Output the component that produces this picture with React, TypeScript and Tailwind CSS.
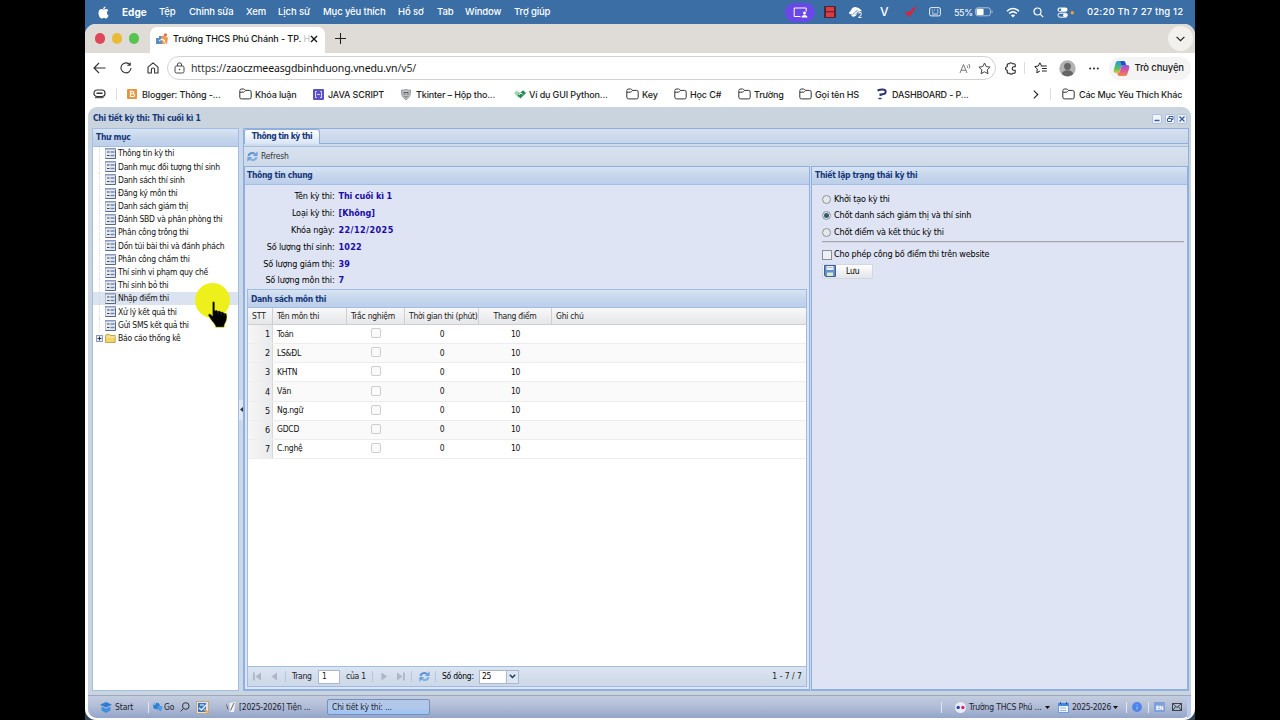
import React from "react";

const menuItems = [
  { name: "Edge", style: "w-[37px] text-[10px] font-bold tracking-normal" },
  { name: "Tệp", style: "w-[30px]" },
  { name: "Chỉnh sửa", style: "w-[57px]" },
  { name: "Xem", style: "w-[32px]" },
  { name: "Lịch sử", style: "w-[45px]" },
  { name: "Mục yêu thích", style: "w-[75px]" },
  { name: "Hồ sơ", style: "w-[39px]" },
  { name: "Tab", style: "w-[28px]" },
  { name: "Window", style: "w-[49px]" },
  { name: "Trợ giúp", style: "w-[60px]" },
];

const treeItems = [
  "Thông tin kỳ thi",
  "Danh mục đối tượng thí sinh",
  "Danh sách thí sinh",
  "Đăng ký môn thi",
  "Danh sách giám thị",
  "Đánh SBD và phân phòng thi",
  "Phân công trông thi",
  "Dồn túi bài thi và đánh phách",
  "Phân công chấm thi",
  "Thí sinh vi phạm quy chế",
  "Thí sinh bỏ thi",
  "Nhập điểm thi",
  "Xử lý kết quả thi",
  "Gửi SMS kết quả thi",
];

const info = [
  { label: "Tên kỳ thi:", value: "Thi cuối kì 1", style: "tracking-[-0.13px]" },
  { label: "Loại kỳ thi:", value: "[Không]", style: "tracking-[0px]" },
  { label: "Khóa ngày:", value: "22/12/2025", style: "tracking-[0.42px]" },
  { label: "Số lượng thí sinh:", value: "1022", style: "tracking-[0.2px]" },
  { label: "Số lượng giám thị:", value: "39", style: "tracking-[0.2px]" },
  { label: "Số lượng môn thi:", value: "7", style: "tracking-[0.2px]" },
];

const subjects = ["Toán", "LS&ĐL", "KHTN", "Văn", "Ng.ngữ", "GDCD", "C.nghệ"];

const states = [
  { id: 1, name: "Khởi tạo kỳ thi", checked: false },
  { id: 2, name: "Chốt danh sách giám thị và thí sinh", checked: true },
  { id: 3, name: "Chốt điểm và kết thúc kỳ thi", checked: false },
];

function FolderOutline() {
  return (
    <svg width="13" height="12" viewBox="0 0 13 12" className="shrink-0" fill="none" stroke="#333" strokeWidth="1">
      <path d="M.8 3V9.2a1.7 1.7 0 0 0 1.7 1.7h8a1.7 1.7 0 0 0 1.7-1.7V4.1a1.7 1.7 0 0 0-1.7-1.7H6.6L5.3 1.3A1.5 1.5 0 0 0 4.4 1H2.5A1.7 1.7 0 0 0 .8 2.7M1 4.2h3.3c.6 0 .9-.2 1.2-.6l1-1.1" />
    </svg>
  );
}

function RefreshBlue() {
  return (
    <svg width="11" height="11" viewBox="0 0 11 11" className="shrink-0" fill="none">
      <path d="M1.500 5C2 2.200 5.500 1 8 3" stroke="#5f93d2" strokeWidth="2.200" />
      <path d="M10.600.3v4.700H5.900z" fill="#6f9fd9" />
      <path d="M9.500 6C9 8.800 5.500 10 3 8" stroke="#7fb0e4" strokeWidth="2.200" />
      <path d="M.4 10.700V6h4.700z" fill="#6f9fd9" />
    </svg>
  );
}

function FormIcon() {
  return (
    <svg width="11" height="11" viewBox="0 0 11 11" className="shrink-0">
      <rect x=".5" y=".5" width="10" height="10" fill="#e6eaf1" stroke="#b4bdcb" />
      <path d="M0 .8h11" stroke="#8797bd" strokeWidth="1.400" />
      <path d="M2 4h2.500M2 7.500h2.500" stroke="#3d4452" strokeWidth="1.100" />
      <path d="M5.500 4h4M5.500 7.500h4" stroke="#6f86b4" strokeWidth="1.300" />
      <path d="M.5 10.500h10V2" fill="none" stroke="#5a6780" />
    </svg>
  );
}

function MenuBar() {
  return (
    <div className="flex h-[40px] shrink-0 items-start bg-[#3a6ea5] text-[10px] leading-none text-white">
      <div className="flex h-6 w-[37px] items-center pl-[13px]">
        <svg width="11" height="13" viewBox="0 0 11 13" fill="#fff">
          <path d="M7.600.4C7.600 1.900 6.500 3 5.200 3 5.100 1.700 6.200.5 7.600.4zM9 6.700c0-1.100.6-1.900 1.400-2.400-.6-.8-1.500-1.200-2.400-1.200-1 0-1.700.5-2.300.5-.6 0-1.300-.5-2.200-.5C1.800 3.200.5 4.500.5 6.900c0 2.500 1.600 5.500 3.100 5.500.8 0 1.200-.5 2.200-.5s1.300.5 2.100.5c1.200 0 2.300-1.900 2.700-3C9.600 9 9 8 9 6.700z" />
        </svg>
      </div>
      <div className="flex h-6 items-center whitespace-nowrap text-[9.500px] font-medium tracking-[-0.12px]">
        {menuItems.map((item) => (
          <span key={item.name} className={item.style}>
            {item.name}
          </span>
        ))}
      </div>
      <div className="ml-[211px] flex h-6 items-center">
        <div className="flex h-[19px] w-[30px] items-center justify-center rounded-full bg-[#6a48e8]">
          <svg width="15" height="11" viewBox="0 0 15 11" fill="none" stroke="#fff">
            <path d="M7.500 9.500H1.200V1h12v3.500" />
            <circle cx="11.500" cy="6" r="1.500" fill="#fff" stroke="none" />
            <path d="M8.500 10.500c0-3.500 6-3.500 6 0z" fill="#fff" stroke="none" />
          </svg>
        </div>
        <svg width="12" height="12" viewBox="0 0 12 12" className="ml-[9px]">
          <rect width="12" height="12" rx="1" fill="#4a2733" />
          <path d="M2 1h8v4.300H2zM2 6.300h8V11H2z" fill="#dc3a44" />
        </svg>
        <svg width="16" height="13" viewBox="0 0 16 13" className="ml-[12px]">
          <path d="M.8 7C1.500 5.800 2.500 5.500 3 4.300 4 2 6 .8 8 1.200c3 .3 5 2 6 4.300-2-.7-3 .3-4 1.500S8 11 5 10.700C3.500 10.500 3 9.500 3.800 8.300 2.500 8.500 1.500 8 .8 7z" fill="#fff" />
          <path d="M4.500 8.500c2-.5 2.500-3.500 5-4M7.500 9c1-1 1.500-2.500 3.500-3.300" stroke="#3a6ea5" strokeWidth=".8" fill="none" />
          <circle cx="12" cy="9.500" r="3.200" fill="#3a6ea5" />
          <text x="9.800" y="12.300" fontSize="7" fill="#fff" fontFamily="Inter" fontWeight="500">2</text>
        </svg>
        <span className="ml-[16px] w-[25px] text-[12px] font-medium">V</span>
        <svg width="12" height="12" viewBox="0 0 12 12" className="shrink-0">
          <path d="M1 5l2.500 1.500L9.500.8 11.500 1 7 7.500 4.500 11.500 3 9 .5 8.500z" fill="#d2283f" />
        </svg>
        <svg width="12" height="10" viewBox="0 0 12 10" className="ml-[12px]" fill="none" stroke="#e8f0f8">
          <rect x=".6" y=".6" width="10.800" height="8.300" rx="1.500" />
          <path d="M2.500 3h1M5 3h1M8 3h1.500M3 5h1.500M8 5h1.500M3 7h6" strokeWidth=".9" />
        </svg>
        <span className="ml-[13px] w-[21px] text-[9px] tracking-[-0.400px]">55%</span>
        <svg width="18" height="10" viewBox="0 0 18 10" fill="none">
          <rect x=".6" y=".8" width="14.800" height="8" rx="2.300" stroke="#a8c1da" />
          <rect x="1.600" y="1.700" width="7" height="6.200" rx="1" fill="#fff" />
          <path d="M17 3.500v2.500" stroke="#a8c1da" />
        </svg>
        <svg width="14" height="11" viewBox="0 0 14 11" className="ml-[13px]" fill="none" stroke="#fff" strokeWidth="1.500">
          <path d="M1 4.200c3.500-3.600 8.500-3.600 12 0M3.200 6.500c2.200-2.200 5.400-2.200 7.600 0" />
          <path d="M4.900 8.300c1.200-1.200 3-1.200 4.200 0L7 10.400z" fill="#fff" stroke="none" />
        </svg>
        <svg width="11" height="11" viewBox="0 0 11 11" className="ml-[13px]" fill="none" stroke="#fff" strokeWidth="1.200">
          <circle cx="4.500" cy="4.500" r="3.500" />
          <path d="M7.200 7.200l3 3" />
        </svg>
        <svg width="18" height="11" viewBox="0 0 18 11" className="ml-[13px]">
          <rect x=".5" y=".5" width="10" height="4.300" rx="2.100" fill="#fff" />
          <circle cx="3" cy="2.700" r="1.300" fill="#3a6ea5" />
          <rect x="1" y="6.200" width="9.400" height="4" rx="2" fill="none" stroke="#fff" />
          <circle cx="8" cy="8.200" r="1.900" fill="#fff" />
          <circle cx="15.300" cy="5.800" r="1.700" fill="#e9a13b" />
        </svg>
        <span className="ml-[12px] whitespace-nowrap text-[9.500px] font-medium tracking-[0.17px]">02:20 Th 7 27 thg 12</span>
      </div>
    </div>
  );
}

function TabStrip() {
  return (
    <div className="flex h-[29px] shrink-0 items-center bg-[#dfdbd7]">
      <div className="flex w-[65px] gap-[6.5px] pl-[9.500px]">
        <span className="size-[10.5px] rounded-full bg-[#df4858]" />
        <span className="size-[10.5px] rounded-full bg-[#eabb35]" />
        <span className="size-[10.5px] rounded-full bg-[#57c452]" />
      </div>
      <div className="flex h-[26px] w-[175px] items-center self-end rounded-t-[7px] bg-white pb-[2px] pl-[6px]">
        <svg width="12" height="12" viewBox="0 0 12 12" className="shrink-0">
          <path d="M0 5h3v6H0zM3 3h3v8H3z" fill="#5a8fc4" />
          <path d="M5 4l3-2 4 3-1 6H6z" fill="#ef9a55" />
          <circle cx="9.500" cy="1.800" r="1.500" fill="#e46a3a" />
          <path d="M3 8l3-2 4 5M7 6l2 2" stroke="#fff" fill="none" />
        </svg>
        <div className="ml-[5px] w-[137px] whitespace-nowrap text-[9px] font-medium leading-[14px] tracking-[-0.08px] text-[#111]">
          Trường THCS Phú Chánh - TP. <span className="text-[#c8c8c8]">H</span>
        </div>
        <svg width="8" height="8" viewBox="0 0 8 8" className="shrink-0" stroke="#111" strokeWidth="1.300">
          <path d="M1 1l6 6M7 1L1 7" />
        </svg>
      </div>
      <svg width="11" height="11" viewBox="0 0 11 11" className="ml-[10px]" stroke="#222" strokeWidth="1.100">
        <path d="M5.500 0v11M0 5.500h11" />
      </svg>
      <div className="ml-auto mr-[2px] flex size-[25px] items-center justify-center rounded-full bg-[#f3f1ee]">
        <svg width="9" height="6" viewBox="0 0 9 6" fill="none" stroke="#222" strokeWidth="1.200">
          <path d="M.6.8l3.900 3.900L8.400.8" />
        </svg>
      </div>
    </div>
  );
}

function AddressBar() {
  return (
    <div className="flex h-[29px] shrink-0 items-center bg-white pt-px">
      <svg width="13" height="12" viewBox="0 0 13 12" className="ml-[8px]" fill="none" stroke="#333" strokeWidth="1.100">
        <path d="M6 1L1 6l5 5M1 6h11.500" />
      </svg>
      <svg width="12" height="12" viewBox="0 0 12 12" className="ml-[14px]" fill="none" stroke="#333" strokeWidth="1.100">
        <path d="M9.900 2.700A5 5 0 1 0 11 6M10.200.5v2.800H7.300" />
      </svg>
      <svg width="12" height="12" viewBox="0 0 12 12" className="ml-[15px]" fill="none" stroke="#333" strokeWidth="1.100">
        <path d="M1 5.200L6 .9l5 4.300V11H7.600V7.600a1.600 1.600 0 0 0-3.200 0V11H1z" strokeLinejoin="round" />
      </svg>
      <div className="ml-[8px] flex h-[24px] w-[829px] items-center rounded-full border border-[#d2d2d2]">
        <svg width="11" height="12" viewBox="0 0 11 12" className="ml-[6px]" fill="none" stroke="#444">
          <rect x="1" y="4" width="9" height="7" rx="1.500" />
          <path d="M3.300 4V3a2.200 2.200 0 0 1 4.400 0v1" />
          <circle cx="5.500" cy="7.500" r=".8" fill="#444" stroke="none" />
        </svg>
        <span className="ml-[6px] whitespace-nowrap font-['Noto_Sans',sans-serif] text-[10.5px] leading-none tracking-[-0.13px] text-[#333]">
          https://<span className="text-[#111]">zaoczmeeasgdbinhduong.vnedu.vn</span>/v5/
        </span>
        <svg width="12" height="11" viewBox="0 0 12 11" className="ml-auto" fill="none" stroke="#666" strokeWidth=".9">
          <path d="M1 10l3.500-8.500L8 10M2.200 7.300h4.600M8 2.500c.8.600.8 1.800.3 2.500M9.500 1c1.500 1.200 1.500 3.300.5 4.600" />
        </svg>
        <svg width="13" height="13" viewBox="0 0 13 13" className="ml-[7px] mr-[4px]" fill="none" stroke="#444">
          <path d="M6.500 1l1.700 3.600 3.900.5-2.900 2.700.8 3.900-3.500-1.900L3 11.700l.8-3.900L.9 5.100l3.900-.5z" strokeLinejoin="round" />
        </svg>
      </div>
      <svg width="12" height="13" viewBox="0 0 12 13" className="ml-[9px]" fill="none" stroke="#222" strokeWidth="1.100">
        <path d="M10.200 4.700V2.800a1 1 0 0 0-1-1H7.400a1.500 1.500 0 0 0-2.900 0H3.200a1 1 0 0 0-1 1v2a1.700 1.700 0 0 0 0 3.400v2a1 1 0 0 0 1 1h1.500a1.500 1.500 0 0 0 2.900 0h1.600a1 1 0 0 0 1-1V8.300H9a1.800 1.800 0 0 1 0-3.600z" strokeLinejoin="round" />
      </svg>
      <span className="ml-[7px] h-[12px] w-px bg-[#ddd]" />
      <svg width="13" height="12" viewBox="0 0 13 12" className="ml-[9px]" fill="none" stroke="#222">
        <path d="M7.500 3.800L5.900.8 4.300 4 .8 4.600l2.500 2.500-.5 3.700 3.100-1.700M6.800 4h6M8 6.500h4.800M8 9h4.800" strokeLinejoin="round" />
      </svg>
      <svg width="17" height="17" viewBox="0 0 17 17" className="ml-[12px]">
        <circle cx="8.500" cy="8.500" r="8.200" fill="#b3b3b3" />
        <circle cx="8.500" cy="6.500" r="3.400" fill="#666" />
        <path d="M3 14c0-5 11-5 11 0-3 3-8 3-11 0z" fill="#666" />
      </svg>
      <svg width="10" height="3" viewBox="0 0 10 3" className="ml-[13px]" fill="#222">
        <circle cx="1.200" cy="1.500" r="1" />
        <circle cx="5" cy="1.500" r="1" />
        <circle cx="8.800" cy="1.500" r="1" />
      </svg>
      <div className="ml-[10px] flex h-[23px] w-[82px] items-center rounded-full bg-[#f4f4f4] pl-[4px]">
        <svg width="17" height="17" viewBox="0 0 17 17" className="shrink-0">
          <defs>
            <linearGradient id="cpA" x1="0" y1="0" x2="0" y2="1">
              <stop offset="0" stopColor="#1f9be0" />
              <stop offset=".6" stopColor="#4fc06a" />
              <stop offset="1" stopColor="#e9c32c" />
            </linearGradient>
            <linearGradient id="cpB" x1="0" y1="0" x2="0" y2="1">
              <stop offset="0" stopColor="#8a5be0" />
              <stop offset=".5" stopColor="#e0559a" />
              <stop offset="1" stopColor="#f08a4a" />
            </linearGradient>
          </defs>
          <path d="M5 1h5.500c1 0 1.500.6 1.800 1.500L13 5h-2.500c-1.500 0-2 .6-2.400 2l-1.200 4c-.4 1.500-1 2-2.400 2H2.700C.9 13 .3 11.500.8 9.800L2.500 3.500C3 1.800 3.600 1 5 1z" fill="url(#cpA)" />
          <path d="M12 16H6.500c-1 0-1.500-.6-1.800-1.500L4.300 13c1.600 0 2.300-.5 2.700-2l1.200-4c.4-1.500 1-2 2.400-2h3.700c1.800 0 2.400 1.500 1.900 3.200l-1.700 5.300c-.5 1.700-1.100 2.500-2.500 2.500z" fill="url(#cpB)" />
          <path d="M7.500 1H10c1.300 0 2 .6 2.300 1.500L13 5h-2.500c-1 0-1.600.3-2 1z" fill="#2452c4" />
        </svg>
        <span className="ml-[4.500px] whitespace-nowrap text-[9.5px] font-medium leading-none tracking-[-0.15px] text-[#222]">Trò chuyện</span>
      </div>
    </div>
  );
}

function Bookmarks() {
  return (
    <div className="flex h-[25px] shrink-0 items-center whitespace-nowrap bg-white pb-px text-[9px] font-medium leading-none tracking-[-0.14px] text-[#222]">
      <svg width="13" height="10" viewBox="0 0 13 10" className="ml-[8px]" fill="none" stroke="#333" strokeWidth="1.200">
        <rect x="1" y="1" width="11" height="6.500" rx="3" />
        <path d="M3.500 4.300h6" strokeWidth="1.600" />
        <path d="M2 8.700h8.500" strokeWidth="1" />
      </svg>
      <span className="ml-[10px] h-[12px] w-px bg-[#ddd]" />
      <div className="ml-[10px] flex w-[112px] items-center gap-[5px]">
        <svg width="10" height="10" viewBox="0 0 10 10">
          <rect width="10" height="10" rx="1" fill="#e6973d" />
          <path d="M3.500 2.300h2a1.200 1.200 0 0 1 0 2.400h-2zM3.500 4.700h2.800a1.400 1.400 0 0 1 0 2.800H3.500z" fill="none" stroke="#fff" strokeWidth="1.100" />
        </svg>
        Blogger: Thông -...
      </div>
      <div className="flex w-[74px] items-center gap-[3px]">
        <FolderOutline />
        Khóa luận
      </div>
      <div className="flex w-[88px] items-center gap-[4px]">
        <svg width="11" height="11" viewBox="0 0 11 11">
          <rect width="11" height="11" rx="1" fill="#5c50c8" />
          <path d="M4 2.500H2.500v6H4M7 2.500h1.500v6H7M3.800 5.500h3.400" fill="none" stroke="#e8e4ff" strokeWidth=".9" />
        </svg>
        JAVA SCRIPT
      </div>
      <div className="flex w-[113px] items-center gap-[5px]">
        <svg width="10" height="11" viewBox="0 0 10 11">
          <path d="M.5 1C3 1.500 4 .6 5 .2 6 .6 7 1.500 9.500 1c.2 4-.5 7.500-4.500 9.700C1 8.500.3 5 .5 1z" fill="#bfc3c8" stroke="#777" strokeWidth=".7" />
          <path d="M2.500 3.500h5M2.500 5h2M5.800 5h2M3.500 7l1.500 1.500L6.500 7" stroke="#555" strokeWidth=".9" fill="none" />
        </svg>
        Tkinter – Hộp tho...
      </div>
      <div className="flex w-[112px] items-center gap-[3px]">
        <svg width="12" height="9" viewBox="0 0 12 9">
          <path d="M0 3l3-2.500L6 3l-1.500 5z" fill="#9ed6b4" />
          <path d="M6 3L9 .3 12 3 6.500 8.500 3.500 5.500z" fill="#2c8b55" />
          <path d="M5 5l2-2 1.500 1.500" stroke="#fff" fill="none" />
        </svg>
        Ví dụ GUI Python...
      </div>
      <div className="flex w-[48px] items-center gap-[3px]">
        <FolderOutline />
        Key
      </div>
      <div className="flex w-[64px] items-center gap-[3px]">
        <FolderOutline />
        Học C#
      </div>
      <div className="flex w-[61px] items-center gap-[3px]">
        <FolderOutline />
        Trường
      </div>
      <div className="flex w-[78px] items-center gap-[3px]">
        <FolderOutline />
        Gọi tên HS
      </div>
      <div className="flex w-[156px] items-center gap-[5px]">
        <svg width="10" height="12" viewBox="0 0 10 12" fill="none" stroke="#28326e" strokeWidth="2">
          <path d="M.5 2.500C3 1.500 8.500.5 8.700 3.500 8.800 6 6 6.500 3.500 6.500V8" />
          <path d="M1.500 10.500h3" strokeWidth="1.500" />
        </svg>
        DASHBOARD - P...
      </div>
      <svg width="6" height="9" viewBox="0 0 6 9" className="shrink-0" fill="none" stroke="#222" strokeWidth="1.100">
        <path d="M.8.700l4 3.800-4 3.800" />
      </svg>
      <span className="ml-[11px] h-[12px] w-px bg-[#ddd]" />
      <div className="ml-[11px] flex items-center gap-[4px] tracking-[-0.2px]">
        <FolderOutline />
        Các Mục Yêu Thích Khác
      </div>
    </div>
  );
}

function PanelTitle({ children, className = "" }: { children: React.ReactNode; className?: string }) {
  return (
    <div
      className={`flex h-[18px] shrink-0 items-center whitespace-nowrap border-b border-[#a3bde3] bg-linear-to-b from-[#d8e4f3] via-[#c6d6ec] via-50% to-[#bccfea] font-bold tracking-[-0.32px] text-[#17377a] ${className}`}
    >
      {children}
    </div>
  );
}

function Sidebar() {
  return (
    <div className="flex w-[147px] shrink-0 flex-col border border-[#a3bde3] bg-white">
      <PanelTitle className="pb-px pl-[3px]">Thư mục</PanelTitle>
      <div className="relative">
        {treeItems.map((item) => (
          <div
            key={item}
            className={`flex h-[13.2px] items-center whitespace-nowrap pl-[6px] ${item === "Nhập điểm thi" ? "bg-[#dce3f0]" : ""}`}
          >
            <span className="mr-[1px] h-full w-[5px] border-l border-dotted border-[#dadada]" />
            <FormIcon />
            <span className="ml-[2px]">{item}</span>
          </div>
        ))}
        <div className="flex h-[13.2px] items-center whitespace-nowrap pl-[3px]">
          <svg width="7" height="7" viewBox="0 0 7 7">
            <rect x=".5" y=".5" width="6" height="6" fill="#e9edf4" stroke="#8d9bb6" />
            <path d="M3.500 1.500v4M1.500 3.500h4" stroke="#334" />
          </svg>
          <svg width="11" height="9" viewBox="0 0 11 9" className="ml-[2px]">
            <path d="M.5 1.500l.8-1h3l1 1h4.900v7H.5z" fill="#f2d468" stroke="#b8953a" strokeWidth=".8" />
            <path d="M1 3h9" stroke="#fbeeb0" />
          </svg>
          <span className="ml-[2px]">Báo cáo thống kê</span>
        </div>
        {/* highlighted mouse pointer */}
        <div className="absolute left-[102px] top-[136px] size-[35px] rounded-full bg-[#eef01c]" />
        <svg width="23" height="31" viewBox="0 0 22 31" className="absolute left-[113px] top-[153px]" preserveAspectRatio="none">
          <path
            d="M7.200 1.500c1 0 1.300.7 1.300 1.500v7.500c.5-.8 2.700-.7 2.900.7.700-.9 2.700-.6 3 .8.900-.8 2.900-.2 3 1.200.8-.5 2.400.1 2.600 1.600.3 3.500-.2 6-1.500 8.200-.7 1.300-1 2.300-1.100 4.300H9.200c-.3-2.500-1.700-3.800-3.200-5.700C4.300 19.500 3.600 17.600 2.300 16c-.8-1.200.1-2.600 1.500-2.200.9.300 1.600 1.100 2.200 2V3c0-.8.300-1.500 1.200-1.500z"
            fill="#000"
            stroke="#eef01c"
            strokeWidth=".6"
          />
          <path d="M11.400 11.500v3M14.400 12.500v2.500M17.300 13.500v2" stroke="#555" strokeWidth=".5" />
        </svg>
      </div>
    </div>
  );
}

function SubjectGrid() {
  return (
    <div className="ml-[2px] flex w-[560px] flex-1 flex-col border border-[#9fbbe2] bg-white">
      <PanelTitle className="pl-[3px]">Danh sách môn thi</PanelTitle>
      <div className="flex h-[17px] shrink-0 items-center whitespace-nowrap border-b border-[#cfcfcf] bg-linear-to-b from-[#f8f8f8] to-[#e6e7ea] text-[#222]">
        <span className="flex h-full w-[25px] items-center border-r border-[#cfcfcf] pl-[4px] tracking-[-0.100px]">STT</span>
        <span className="flex h-full w-[74px] items-center border-r border-[#cfcfcf] pl-[4px]">Tên môn thi</span>
        <span className="flex h-full w-[58px] items-center border-r border-[#cfcfcf] pl-[4px]">Trắc nghiệm</span>
        <span className="flex h-full w-[74px] items-center overflow-hidden border-r border-[#cfcfcf] pl-[4px]">Thời gian thi (phút)</span>
        <span className="flex h-full w-[73px] items-center justify-center border-r border-[#cfcfcf]">Thang điểm</span>
        <span className="pl-[4px]">Ghi chú</span>
      </div>
      {subjects.map((name, index) => (
        <div
          key={name}
          className={`flex h-[19.050px] shrink-0 items-center border-b border-[#ededed] ${index % 2 ? "bg-[#fafafa]" : "bg-white"}`}
        >
          <span className="flex h-full w-[25px] items-center justify-end border-r border-[#d8d8d8] bg-linear-to-r from-[#f6f6f6] to-[#e9eaec] pr-[2px] pt-px text-[9px]">
            {index + 1}
          </span>
          <span className="w-[74px] pl-[4px]">{name}</span>
          <span className="flex w-[58px] justify-center">
            <span className="mb-[2px] size-[10px] rounded-[2px] border border-[#cdcdcd] bg-[#fafafa]" />
          </span>
          <span className="w-[74px] text-center">0</span>
          <span className="w-[73px] text-center">10</span>
        </div>
      ))}
      <div className="mt-auto flex h-[20px] shrink-0 items-center whitespace-nowrap border-t border-[#a3bde3] bg-linear-to-b from-[#dbe4f1] to-[#ccd8e8] text-[#222]">
        <svg width="30" height="9" viewBox="0 0 30 9" className="ml-[5px]" fill="#acb6c4">
          <path d="M0 .5h1.800v8H0zM8 .5v8l-5.500-4zM24 .5v8l-5.500-4z" />
        </svg>
        <span className="ml-[2px] h-[11px] w-px bg-[#b5c5dc]" />
        <span className="ml-[6px] w-[26px]">Trang</span>
        <span className="flex h-[14px] w-[22px] items-center border border-[#a9b8cc] bg-white pl-[3px]">1</span>
        <span className="ml-[6px] w-[25px]">của 1</span>
        <span className="ml-[1px] h-[11px] w-px bg-[#b5c5dc]" />
        <svg width="25" height="9" viewBox="0 0 25 9" className="ml-[8px]" fill="#acb6c4">
          <path d="M.5.500v8l5.500-4zM16 .5v8l5.500-4zM22 .5h1.800v8H22z" />
        </svg>
        <span className="ml-[5px] mr-[7px] h-[11px] w-px bg-[#b5c5dc]" />
        <RefreshBlue />
        <span className="ml-[5px] h-[11px] w-px bg-[#b5c5dc]" />
        <span className="ml-[6px] w-[37px] text-black">Số dòng:</span>
        <span className="flex h-[14px] w-[28px] items-center border border-[#a9b8cc] bg-white pl-[2px] text-black">25</span>
        <span className="flex h-[14px] w-[12px] items-center justify-center border border-l-0 border-[#a9b8cc] bg-[#dde7f4]">
          <svg width="7" height="5" viewBox="0 0 7 5" fill="none" stroke="#223a66" strokeWidth="1.500">
            <path d="M.8.800l2.700 2.700L6.200.8" />
          </svg>
        </span>
        <span className="ml-auto mr-[4px] tracking-[0px]">1 - 7 / 7</span>
      </div>
    </div>
  );
}

function StatusPanel() {
  return (
    <div className="ml-[1px] flex flex-1 flex-col border border-[#8fb0de] bg-[#dee4f3]">
      <PanelTitle className="pl-[3px]">Thiết lập trạng thái kỳ thi</PanelTitle>
      <div className="flex flex-col pl-[10px] pr-[3px] pt-[6px] text-[9px] tracking-[-0.19px] text-black">
        {states.map((s) => (
          <div key={s.id} className="flex h-[16.500px] items-center">
            <span className="flex size-[9px] items-center justify-center rounded-full border border-[#8c9096] bg-[#e6e9ec]">
              {s.checked && <span className="size-[5px] rounded-full bg-[#355a6e]" />}
            </span>
            <span className="ml-[3px]">{s.name}</span>
          </div>
        ))}
        <div className="h-[2px] border-t border-[#a4a8b0] bg-[#ced3df]" />
        <div className="mt-[4px] flex h-[16px] items-center">
          <span className="size-[10px] border border-[#8c9096] bg-[#eceff4]" />
          <span className="ml-[2px]">Cho phép công bố điểm thi trên website</span>
        </div>
        <div className="mt-px flex h-[15px] w-[51px] items-center border border-[#d3d8e0] bg-linear-to-b from-white to-[#e4e5ea] pl-[1px]">
          <svg width="12" height="12" viewBox="0 0 12 12">
            <path d="M.5.500h11v11h-10l-1-1z" fill="#668fcb" stroke="#3c5f98" />
            <path d="M2.500 1h7v4h-7z" fill="#eaf0f8" />
            <path d="M3 7.500h6V11H3z" fill="#d5ecc8" />
            <path d="M3.500 2.500h5" stroke="#9ab" strokeWidth=".7" />
          </svg>
          <span className="ml-[10px] text-[8.500px]">Lưu</span>
        </div>
      </div>
    </div>
  );
}

function ExamPanel() {
  return (
    <div className="flex flex-1 flex-col border border-[#8fb0de] bg-[#cfdcee]">
      <div className="flex h-[15px] shrink-0 items-end border-b border-[#8fb0de] bg-linear-to-b from-[#d5e0f0] to-[#c8d6ea]">
        <div className="-mb-px flex h-[15px] w-[76px] items-center justify-center whitespace-nowrap rounded-t-[3px] border border-b-0 border-[#8fb0de] bg-linear-to-b from-white to-[#d8e4f5] pb-px font-bold tracking-[-0.5px] text-[#17377a]">
          Thông tin kỳ thi
        </div>
      </div>
      <div className="mt-[2px] flex h-[20px] shrink-0 items-center border-t border-[#a3bde3] bg-linear-to-b from-[#d9e2ef] to-[#cdd9e8] pl-[3px] text-[#333]">
        <RefreshBlue />
        <span className="ml-[3px] tracking-[-0.15px]">Refresh</span>
      </div>
      <div className="flex flex-1">
        <div className="flex w-[566px] flex-col border border-[#8fb0de] bg-[#dee4f3] pb-[2px]">
          <PanelTitle className="pl-[2px]">Thông tin chung</PanelTitle>
          <div className="pt-[3px] text-[9px] text-black">
            {info.map((row) => (
              <div key={row.label} className="flex h-[16.900px] items-center whitespace-nowrap">
                <span className="w-[89.500px] text-right tracking-[-0.15px]">{row.label}</span>
                <span className={`ml-[4px] font-bold text-[#1b0ba5] ${row.style}`}>{row.value}</span>
              </div>
            ))}
          </div>
          <SubjectGrid />
        </div>
        <StatusPanel />
      </div>
    </div>
  );
}

function Taskbar() {
  return (
    <div className="flex h-[22px] shrink-0 items-center whitespace-nowrap rounded-b-[9px] bg-linear-to-b from-[#c4cddf] via-[#b0bcd6] to-[#93a5c8] text-[#1c2430]">
      <svg width="12" height="11" viewBox="0 0 12 11" className="ml-[12px]">
        <path d="M6 0l6 2.800-6 2.800L0 2.800z" fill="#2f7cd0" />
        <path d="M1.500 4.500L6 6.700l4.500-2.200v4L6 11 1.500 8.500z" fill="#3f8fe0" />
      </svg>
      <span className="ml-[3px] w-[33px] tracking-[-0.1px]">Start</span>
      <span className="h-[11px] w-px bg-[#e1e7f2]" />
      <svg width="10" height="10" viewBox="0 0 10 10" className="ml-[4px]">
        <circle cx="3.500" cy="4" r="3.300" fill="#2f7cd0" />
        <path d="M5 3.500l4.500 1L8 9.500 4 7z" fill="#4a9be8" />
        <path d="M1 2.500l2-1" stroke="#bfe0ff" />
      </svg>
      <span className="ml-[1px] w-[16px]">Go</span>
      <svg width="10" height="10" viewBox="0 0 10 10" fill="none" stroke="#333">
        <circle cx="5.800" cy="4" r="3.300" />
        <path d="M3.500 6.500L.7 9.300" />
      </svg>
      <svg width="13" height="13" viewBox="0 0 13 13" className="ml-[6px]">
        <rect x=".5" y=".5" width="12" height="12" fill="#dfe4ec" stroke="#c9a878" />
        <path d="M2 2h8v9H2z" fill="#3b78c4" />
        <path d="M3 7l2.500 2L10 4M4 4h4" fill="none" stroke="#f4f7fb" strokeWidth="1.200" />
        <path d="M8 8l3.500 3.500" stroke="#e7a04a" strokeWidth="1.800" />
      </svg>
      <svg width="10" height="10" viewBox="0 0 10 10" className="ml-[17px]">
        <path d="M3.500 1l6-1-1.500 10H3.500z" fill="#f1f2f4" />
        <path d="M.5 2.500l1.500 5M8 1L4.500 8.500" stroke="#666" />
      </svg>
      <span className="ml-[3px] w-[88px] tracking-[-0.22px]">[2025-2026] Tiện ...</span>
      <div className="flex h-[16px] w-[103px] items-center rounded-[2px] border border-[#7490bf] bg-linear-to-b from-[#b3c8e8] from-50% to-[#9cc3f5] pl-[4px] tracking-[-0.2px]">
        Chi tiết kỳ thi: ...
      </div>
      <span className="ml-auto h-[11px] w-px bg-[#e1e7f2]" />
      <svg width="11" height="11" viewBox="0 0 11 11" className="ml-[13px]">
        <circle cx="5.500" cy="5.500" r="5.500" fill="#e9ecf2" />
        <circle cx="3.200" cy="5.500" r="1.700" fill="#2b4cab" />
        <circle cx="7.900" cy="5.500" r="1.700" fill="#d22a72" />
      </svg>
      <span className="ml-[3px] w-[76px] tracking-[-0.15px]">Trường THCS Phú ...</span>
      <svg width="5" height="3" viewBox="0 0 5 3">
        <path d="M0 0h5L2.500 3z" fill="#111" />
      </svg>
      <svg width="11" height="11" viewBox="0 0 11 11" className="ml-[8px]">
        <rect x=".5" y="1.500" width="10" height="9" fill="#f0f5fc" stroke="#6d9cd8" />
        <path d="M.5 1h10v3H.5z" fill="#3d86dd" />
        <path d="M2.500 0v2M8.500 0v2" stroke="#23538f" />
        <path d="M2.500 6h6M2.500 8.500h6" stroke="#5a8fd0" strokeWidth="1.200" strokeDasharray="1.200 .8" />
      </svg>
      <span className="ml-[3px] w-[41px] tracking-[-0.3px]">2025-2026</span>
      <svg width="5" height="3" viewBox="0 0 5 3">
        <path d="M0 0h5L2.500 3z" fill="#111" />
      </svg>
      <span className="ml-[8px] h-[11px] w-px bg-[#e1e7f2]" />
      <svg width="10" height="10" viewBox="0 0 10 10" className="ml-[5px]">
        <circle cx="5" cy="5" r="4.900" fill="#4c84ea" />
        <path d="M5 4.500v3M5 2.300v1" stroke="#a9c6fb" />
      </svg>
      <span className="ml-[6px] h-[11px] w-px bg-[#e1e7f2]" />
      <span className="ml-[5px] flex h-[10px] w-[11px] items-end justify-center rounded-[1px] bg-[#7e9fdb] text-[6px] font-bold leading-[8px] tracking-[-0.3px] text-white">EN</span>
      <svg width="10" height="8" viewBox="0 0 10 8" className="ml-[7px] mr-[5px]" fill="none" stroke="#222">
        <path d="M.5.500h9v7h-9zM.5.500L5 4.500l4.500-4M.5 7.500l3.200-4M9.500 7.500l-3.200-4" strokeWidth=".8" />
      </svg>
      <span className="h-full w-[4px] rounded-br-[9px] bg-[#bccbec]" />
    </div>
  );
}

function App() {
  return (
    <div className="flex h-[720px] w-[1280px] justify-center overflow-hidden bg-black font-['Inter','Noto_Sans',sans-serif]">
      <div className="flex h-full w-[1110px] flex-col bg-[#34435a]">
        <MenuBar />
        <div className="-mt-[16px] flex flex-1 flex-col overflow-hidden rounded-[11px] bg-white">
          <TabStrip />
          <AddressBar />
          <Bookmarks />
          <div className="mb-[2px] ml-[3px] mr-[4px] flex flex-1 flex-col rounded-[9px] bg-[#c9d4de] font-['DejaVu_Sans_Condensed','DejaVu_Sans',sans-serif] text-[8.500px] leading-none tracking-[-0.25px] text-[#111]">
            <div className="flex h-[21px] shrink-0 items-center pl-[5px] pr-[4px] pt-[2px]">
              <span className="font-bold tracking-[-0.3px] text-[#17377a]">Chi tiết kỳ thi: Thi cuối kì 1</span>
              <div className="ml-auto flex gap-[2.500px]">
                <svg width="10" height="10" viewBox="0 0 10 10">
                  <rect x=".5" y=".5" width="9" height="9" rx="1.500" fill="#f0f5fc" stroke="#a9c0e4" />
                  <path d="M2.500 6.500h5" stroke="#3c5a9a" strokeWidth="1.400" />
                </svg>
                <svg width="10" height="10" viewBox="0 0 10 10">
                  <rect x=".5" y=".5" width="9" height="9" rx="1.500" fill="#f0f5fc" stroke="#a9c0e4" />
                  <path d="M2.500 4.500h4v3h-4zM4 4V2.500h4v3H7" fill="none" stroke="#3c5a9a" />
                </svg>
                <svg width="10" height="10" viewBox="0 0 10 10">
                  <rect x=".5" y=".5" width="9" height="9" rx="1.500" fill="#f0f5fc" stroke="#a9c0e4" />
                  <path d="M2.500 2.500l5 5M7.500 2.500l-5 5" stroke="#3c5a9a" strokeWidth="1.300" />
                </svg>
              </div>
            </div>
            <div className="ml-[4px] mr-[2px] flex h-[563px] shrink-0">
              <Sidebar />
              {/* collapse handle between the tree and the content */}
              <div className="flex w-[4px] shrink-0 items-center justify-center bg-[#cbd8ea]">
                <span className="flex h-[20px] w-[4px] items-center justify-center bg-[#dfe7f3]">
                  <svg width="3" height="5" viewBox="0 0 3 5">
                    <path d="M3 0v5L0 2.500z" fill="#333" />
                  </svg>
                </span>
              </div>
              <ExamPanel />
            </div>
            <div className="h-[5px] shrink-0 border-b border-[#9aa9bf]" />
            <Taskbar />
          </div>
        </div>
      </div>
    </div>
  );
}

export default App;
